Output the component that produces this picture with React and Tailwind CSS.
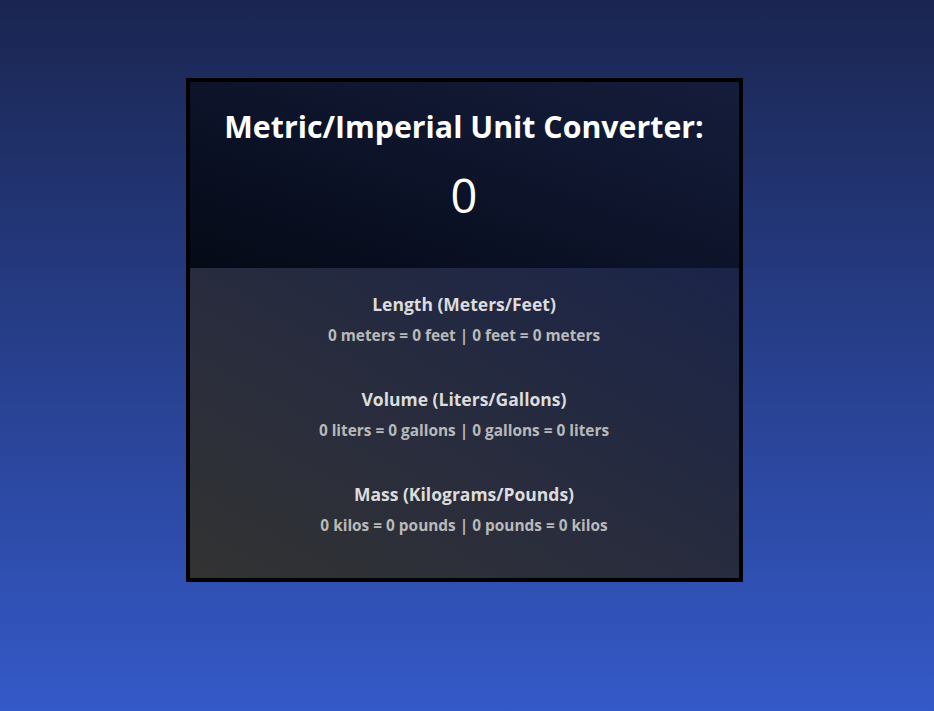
import React from "react";

const rows = [
  { h: "Length (Meters/Feet)", t: "0 meters = 0 feet | 0 feet = 0 meters" },
  { h: "Volume (Liters/Gallons)", t: "0 liters = 0 gallons | 0 gallons = 0 liters" },
  { h: "Mass (Kilograms/Pounds)", t: "0 kilos = 0 pounds | 0 pounds = 0 kilos" },
];

export default function App() {
  return (
    <div
      className="min-h-[711px] w-full bg-[linear-gradient(to_bottom,#1a2550,#3459c8)] pt-[78px] pr-[6px] flex justify-center"
      style={{ fontFamily: '"Open Sans", "Noto Sans", sans-serif' }}
    >
      <div className="w-[557px] h-[504px] border-4 border-black flex flex-col">
        <div className="h-[186px] bg-[linear-gradient(to_top_right,#050a17,#151d3c)] flex flex-col items-center pt-[25px]">
          <h1 className="text-[30.3px] font-bold text-white leading-[40px]">
            Metric/Imperial Unit Converter:
          </h1>
          <div className="text-[47px] text-white leading-[60px] mt-[18px]">0</div>
        </div>
        <div className="flex-1 bg-[linear-gradient(to_top_right,#333333,#1b2449)] flex flex-col items-center pt-[22px]">
          {rows.map((r) => (
            <div key={r.h} className="flex flex-col items-center h-[95px]">
              <div className="text-[17.5px] font-bold text-[#dcdcdc] leading-[28px]">{r.h}</div>
              <div className="text-[15.4px] font-bold text-[#b9b9b9] leading-[22px] mt-[7px]">{r.t}</div>
            </div>
          ))}
        </div>
      </div>
    </div>
  );
}
